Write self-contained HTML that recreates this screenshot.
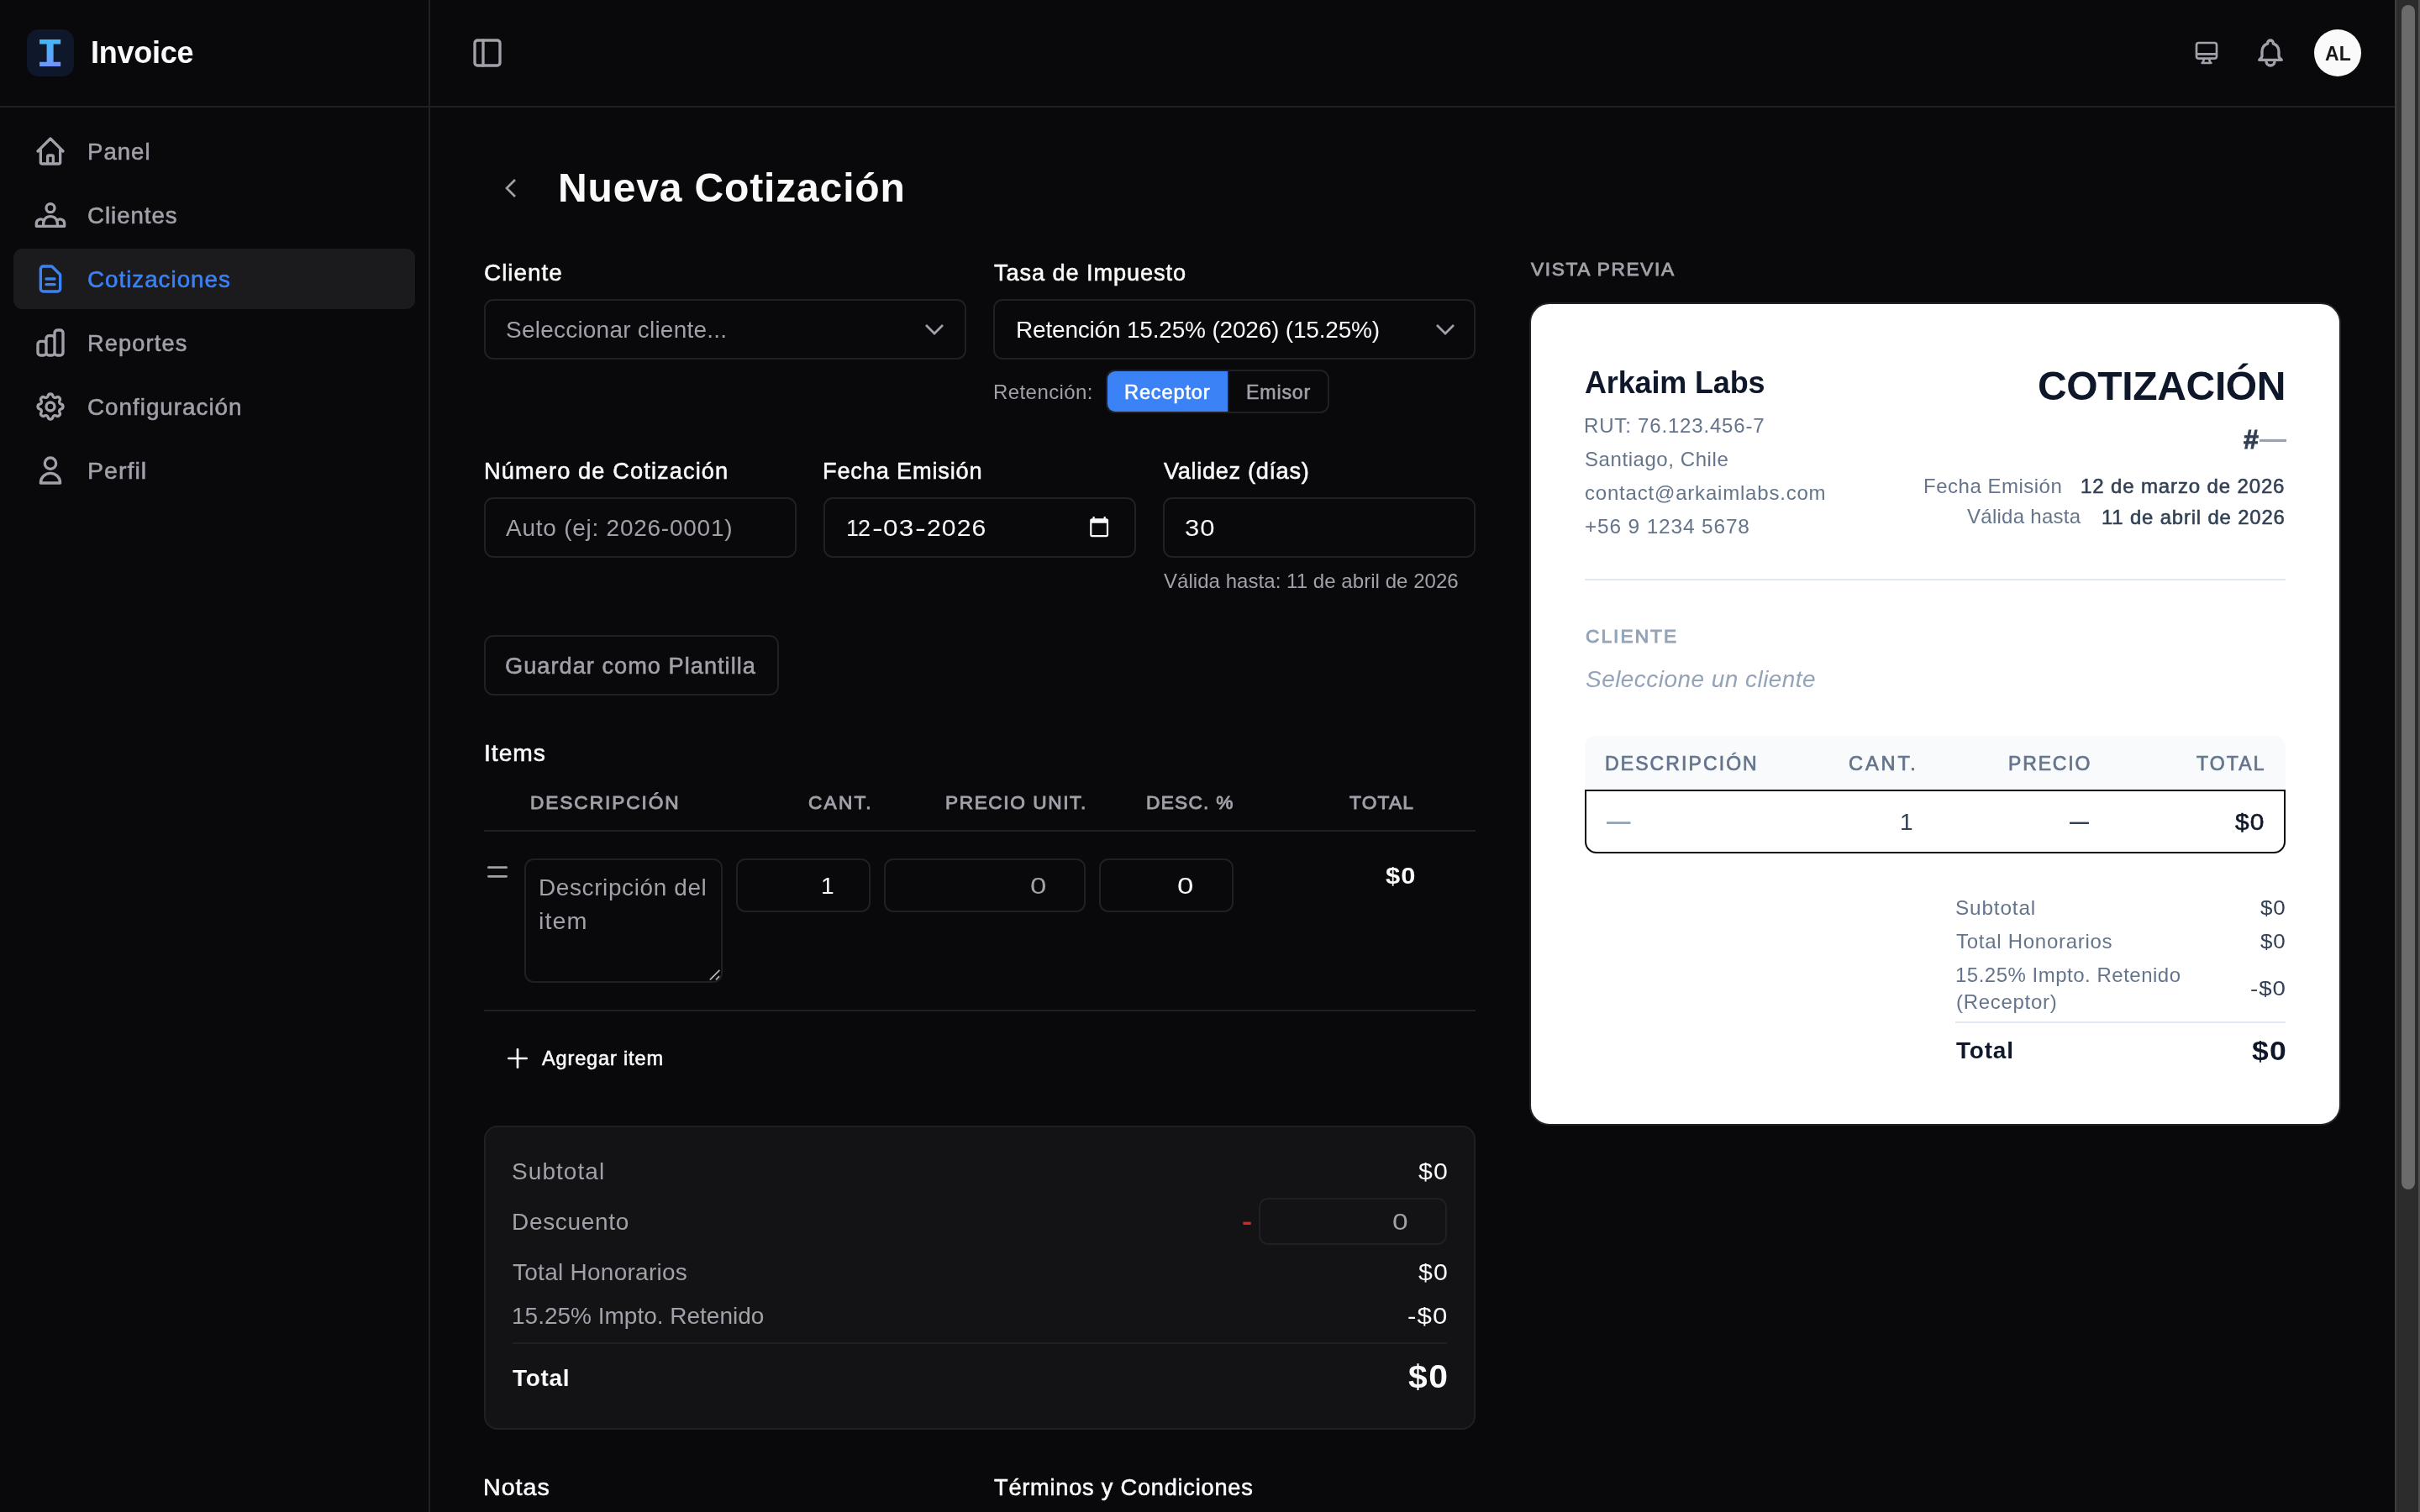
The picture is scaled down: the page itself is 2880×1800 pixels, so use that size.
<!DOCTYPE html>
<html lang="es"><head><meta charset="utf-8"><title>Nueva Cotización</title>
<style>
*{box-sizing:border-box;margin:0;padding:0}
html,body{width:2880px;height:1800px;overflow:hidden;background:#09090b;font-family:"Liberation Sans",sans-serif}
.t{position:absolute;white-space:nowrap;will-change:transform;transform-origin:0 50%}
.a{position:absolute}
.box{position:absolute;border:2px solid #202024;border-radius:11px}
svg{position:absolute;overflow:visible;fill:none;stroke-linecap:round;stroke-linejoin:round}
.ic{stroke:#a1a1aa;stroke-width:2}
.logoI{position:absolute;font-family:"Liberation Mono",monospace;font-weight:700;background:linear-gradient(160deg,#38bdf8 10%,#60a5fa 50%,#8b7cf6 95%);-webkit-background-clip:text;background-clip:text;color:transparent;white-space:nowrap}
</style></head>
<body>
<aside>
<div class="a" style="left:510px;top:0px;width:2px;height:1800px;background:#202024;"></div>
<div class="a" style="left:32px;top:35px;width:56px;height:56px;background:#0f172a;border-radius:14px;"></div>
<span class="logoI" style="left:43.9px;top:39px;font-size:52px;line-height:56px;transform:scale(1.08,0.93);">I</span>
<div class="a" style="left:16px;top:296px;width:478px;height:72px;background:#1b1b1d;border-radius:11px;"></div>
<svg class="ic" style="left:40px;top:160px;" width="40" height="40" viewBox="0 0 24 24"><path d="M3 12l2-2m0 0l7-7 7 7M5 10v10a1 1 0 001 1h3m10-11l2 2m-2-2v10a1 1 0 01-1 1h-3m-6 0a1 1 0 001-1v-4a1 1 0 011-1h2a1 1 0 011 1v4a1 1 0 001 1m-6 0h6"/></svg>
<svg class="ic" style="left:40px;top:236px;" width="40" height="40" viewBox="0 0 24 24"><path d="M17 20h5v-2a3 3 0 00-5.356-1.857M17 20H7m10 0v-2c0-.656-.126-1.283-.356-1.857M7 20H2v-2a3 3 0 015.356-1.857M7 20v-2c0-.656.126-1.283.356-1.857m0 0a5.002 5.002 0 019.288 0M15 7a3 3 0 11-6 0 3 3 0 016 0z"/></svg>
<svg class="ic" style="left:40px;top:312px;stroke:#3b82f6;" width="40" height="40" viewBox="0 0 24 24"><path d="M9 12h6m-6 4h6m2 5H7a2 2 0 01-2-2V5a2 2 0 012-2h5.586a1 1 0 01.707.293l5.414 5.414a1 1 0 01.293.707V19a2 2 0 01-2 2z"/></svg>
<svg class="ic" style="left:40px;top:388px;" width="40" height="40" viewBox="0 0 24 24"><path d="M9 19v-6a2 2 0 00-2-2H5a2 2 0 00-2 2v6a2 2 0 002 2h2a2 2 0 002-2zm0 0V9a2 2 0 012-2h2a2 2 0 012 2v10m-6 0a2 2 0 002 2h2a2 2 0 002-2m0 0V5a2 2 0 012-2h2a2 2 0 012 2v14a2 2 0 01-2 2h-2a2 2 0 01-2-2z"/></svg>
<svg class="ic" style="left:40px;top:464px;" width="40" height="40" viewBox="0 0 24 24"><path d="M10.325 4.317c.426-1.756 2.924-1.756 3.35 0a1.724 1.724 0 002.573 1.066c1.543-.94 3.31.826 2.37 2.37a1.724 1.724 0 001.065 2.572c1.756.426 1.756 2.924 0 3.35a1.724 1.724 0 00-1.066 2.573c.94 1.543-.826 3.31-2.37 2.37a1.724 1.724 0 00-2.572 1.065c-.426 1.756-2.924 1.756-3.35 0a1.724 1.724 0 00-2.573-1.066c-1.543.94-3.31-.826-2.37-2.37a1.724 1.724 0 00-1.065-2.572c-1.756-.426-1.756-2.924 0-3.35a1.724 1.724 0 001.066-2.573c-.94-1.543.826-3.31 2.37-2.37.996.608 2.296.07 2.572-1.065z"/><path d="M15 12a3 3 0 11-6 0 3 3 0 016 0z"/></svg>
<svg class="ic" style="left:40px;top:540px;" width="40" height="40" viewBox="0 0 24 24"><path d="M16 7a4 4 0 11-8 0 4 4 0 018 0zM12 14a7 7 0 00-7 7h14a7 7 0 00-7-7z"/></svg>
<span class="t" id="t0" style="left:107.7px;top:39px;font-size:36px;line-height:47px;color:#fafafa;font-weight:700;letter-spacing:-0.239px;">Invoice</span>
<span class="t" id="t1" style="left:103.8px;top:162px;font-size:27.2px;line-height:37px;color:#a1a1aa;font-weight:400;-webkit-text-stroke:0.55px currentColor;letter-spacing:0.952px;transform:scaleX(1.0161);">Panel</span>
<span class="t" id="t2" style="left:103.9px;top:238px;font-size:27.2px;line-height:37px;color:#a1a1aa;font-weight:400;-webkit-text-stroke:0.55px currentColor;letter-spacing:0.952px;transform:scaleX(1.0169);">Clientes</span>
<span class="t" id="t3" style="left:103.9px;top:314px;font-size:27.2px;line-height:37px;color:#3b82f6;font-weight:400;-webkit-text-stroke:0.55px currentColor;letter-spacing:0.952px;transform:scaleX(1.0222);">Cotizaciones</span>
<span class="t" id="t4" style="left:103.9px;top:390px;font-size:27.2px;line-height:37px;color:#a1a1aa;font-weight:400;-webkit-text-stroke:0.55px currentColor;letter-spacing:1.130px;">Reportes</span>
<span class="t" id="t5" style="left:103.9px;top:466px;font-size:27.2px;line-height:37px;color:#a1a1aa;font-weight:400;-webkit-text-stroke:0.55px currentColor;letter-spacing:0.952px;transform:scaleX(1.0244);">Configuración</span>
<span class="t" id="t6" style="left:103.8px;top:542px;font-size:27.2px;line-height:37px;color:#a1a1aa;font-weight:400;-webkit-text-stroke:0.55px currentColor;letter-spacing:0.952px;transform:scaleX(1.0509);">Perfil</span>
</aside>
<header>
<div class="a" style="left:0px;top:126px;width:2850px;height:2px;background:#202024;"></div>
<svg class="ic" style="left:560px;top:43px;" width="40" height="40" viewBox="0 0 24 24"><rect x="3" y="3" width="18" height="18" rx="2"/><path d="M9 3v18"/></svg>
<svg class="ic" style="left:2610px;top:47px;" width="32" height="32" viewBox="0 0 24 24"><path d="M9.75 17L9 20l-1 1h8l-1-1-.75-3M3 13h18M5 17h14a2 2 0 002-2V5a2 2 0 00-2-2H5a2 2 0 00-2 2v10a2 2 0 002 2z"/></svg>
<svg class="ic" style="left:2682px;top:43px;" width="40" height="40" viewBox="0 0 24 24"><path d="M15 17h5l-1.405-1.405A2.032 2.032 0 0118 14.158V11a6.002 6.002 0 00-4-5.659V5a2 2 0 10-4 0v.341C7.67 6.165 6 8.388 6 11v3.159c0 .538-.214 1.055-.595 1.436L4 17h5m6 0v1a3 3 0 11-6 0v-1m6 0H9"/></svg>
<div class="a" style="left:2754px;top:35px;width:56px;height:56px;background:#fafafa;border-radius:50%;"></div>
<span class="t" id="t7" style="left:2766.7px;top:48px;font-size:23px;line-height:32px;color:#18181b;font-weight:700;letter-spacing:0.092px;">AL</span>
</header>
<main>
<svg class="ic" style="left:592px;top:208px;" width="32" height="32" viewBox="0 0 24 24"><path d="M15.75 19.5 8.25 12l7.5-7.5" stroke-linecap="butt" stroke-linejoin="miter"/></svg>
<div class="box" style="left:576px;top:356px;width:574px;height:72px;border-radius:11px;background:transparent;border-color:#202024;"></div>
<svg class="ic" style="left:1096px;top:376px;" width="32" height="32" viewBox="0 0 24 24"><path d="m19.5 8.25-7.5 7.5-7.5-7.5" stroke-linecap="butt" stroke-linejoin="miter"/></svg>
<div class="box" style="left:1182px;top:356px;width:574px;height:72px;border-radius:11px;background:transparent;border-color:#202024;"></div>
<svg class="ic" style="left:1704px;top:376px;" width="32" height="32" viewBox="0 0 24 24"><path d="m19.5 8.25-7.5 7.5-7.5-7.5" stroke-linecap="butt" stroke-linejoin="miter"/></svg>
<div class="box" style="left:1316px;top:440px;width:266px;height:52px;border-radius:11px;background:transparent;border-color:#202024;"></div>
<div class="a" style="left:1318px;top:442px;width:143px;height:48px;background:#3b82f6;border-radius:9px 0 0 9px;"></div>
<div class="a" style="left:1461px;top:442px;width:2px;height:48px;background:#202024;"></div>
<div class="box" style="left:576px;top:592px;width:372px;height:72px;border-radius:11px;background:transparent;border-color:#202024;"></div>
<div class="box" style="left:980px;top:592px;width:372px;height:72px;border-radius:11px;background:transparent;border-color:#202024;"></div>
<div class="box" style="left:1384px;top:592px;width:372px;height:72px;border-radius:11px;background:transparent;border-color:#202024;"></div>
<svg style="left:1295px;top:613.9px;stroke:none" width="26.28" height="26.28" viewBox="0 0 24 24"><path fill="#fafafa" d="M20 3h-1V1h-2v2H7V1H5v2H4c-1.1 0-2 .9-2 2v16c0 1.1.9 2 2 2h16c1.1 0 2-.9 2-2V5c0-1.1-.9-2-2-2zm0 18H4V8h16v13z"/></svg>
<div class="box" style="left:576px;top:756px;width:351px;height:72px;border-radius:11px;background:transparent;border-color:#202024;"></div>
<div class="a" style="left:576px;top:988px;width:1180px;height:2px;background:#202024;"></div>
<svg class="ic" style="left:576px;top:1022px;" width="32" height="32" viewBox="0 0 24 24"><path d="M4 8h16M4 16h16"/></svg>
<div class="box" style="left:624px;top:1022px;width:236px;height:148px;border-radius:11px;background:transparent;border-color:#202024;"></div>
<svg style="left:844px;top:1154px" width="14" height="14" viewBox="0 0 14 14"><path d="M0.9 12.3 12.4 0.8M8 12.3l4.1-4.1" stroke="#b4b4b4" stroke-width="1.8" stroke-linecap="butt"/></svg>
<div class="box" style="left:876px;top:1022px;width:160px;height:64px;border-radius:11px;background:transparent;border-color:#202024;"></div>
<div class="box" style="left:1052px;top:1022px;width:240px;height:64px;border-radius:11px;background:transparent;border-color:#202024;"></div>
<div class="box" style="left:1308px;top:1022px;width:160px;height:64px;border-radius:11px;background:transparent;border-color:#202024;"></div>
<div class="a" style="left:576px;top:1202px;width:1180px;height:2px;background:#202024;"></div>
<svg class="ic" style="left:600px;top:1244px;stroke:#fafafa;" width="32" height="32" viewBox="0 0 24 24"><path d="M12 4v16m8-8H4"/></svg>
<div class="box" style="left:576px;top:1340px;width:1180px;height:362px;border-radius:16px;background:#131315;border-color:#202024;"></div>
<div class="box" style="left:1498px;top:1426px;width:224px;height:56px;border-radius:11px;background:transparent;border-color:#202024;"></div>
<div class="a" style="left:610px;top:1598px;width:1112px;height:2px;background:#202024;"></div>
<span class="t" id="t8" style="left:664.1px;top:194px;font-size:48px;line-height:59px;color:#fafafa;font-weight:700;letter-spacing:0.849px;">Nueva Cotización</span>
<span class="t" id="t9" style="left:575.7px;top:306px;font-size:27.2px;line-height:37px;color:#fafafa;font-weight:400;-webkit-text-stroke:0.55px currentColor;letter-spacing:0.952px;transform:scaleX(1.0275);">Cliente</span>
<span class="t" id="t10" style="left:1183.4px;top:306px;font-size:27.2px;line-height:37px;color:#fafafa;font-weight:400;-webkit-text-stroke:0.55px currentColor;letter-spacing:0.895px;">Tasa de Impuesto</span>
<span class="t" id="t11" style="left:601.5px;top:374px;font-size:28px;line-height:37px;color:#a1a1aa;font-weight:400;letter-spacing:0.223px;">Seleccionar cliente...</span>
<span class="t" id="t12" style="left:1208.8px;top:374px;font-size:28px;line-height:37px;color:#fafafa;font-weight:400;letter-spacing:-0.189px;">Retención 15.25% (2026) (15.25%)</span>
<span class="t" id="t13" style="left:1182.0px;top:450px;font-size:24px;line-height:33px;color:#a1a1aa;font-weight:400;letter-spacing:0.421px;">Retención:</span>
<span class="t" id="t14" style="left:1337.9px;top:451px;font-size:23.2px;line-height:32px;color:#ffffff;font-weight:400;-webkit-text-stroke:0.55px currentColor;letter-spacing:0.812px;transform:scaleX(1.0188);">Receptor</span>
<span class="t" id="t15" style="left:1482.9px;top:451px;font-size:23.2px;line-height:32px;color:#a1a1aa;font-weight:400;-webkit-text-stroke:0.55px currentColor;letter-spacing:0.833px;">Emisor</span>
<span class="t" id="t16" style="left:575.7px;top:542px;font-size:27.2px;line-height:37px;color:#fafafa;font-weight:400;-webkit-text-stroke:0.55px currentColor;letter-spacing:1.118px;">Número de Cotización</span>
<span class="t" id="t17" style="left:979.3px;top:542px;font-size:27.2px;line-height:37px;color:#fafafa;font-weight:400;-webkit-text-stroke:0.55px currentColor;letter-spacing:0.819px;">Fecha Emisión</span>
<span class="t" id="t18" style="left:1385.1px;top:542px;font-size:27.2px;line-height:37px;color:#fafafa;font-weight:400;-webkit-text-stroke:0.55px currentColor;letter-spacing:0.653px;">Validez (días)</span>
<span class="t" id="t19" style="left:602.1px;top:610px;font-size:28px;line-height:37px;color:#a1a1aa;font-weight:400;letter-spacing:0.752px;">Auto (ej: 2026-0001)</span>
<span class="t" id="t20" style="left:1006.5px;top:610px;font-size:28px;line-height:37px;color:#fafafa;font-weight:400;letter-spacing:-0.980px;transform:scaleX(0.9643);">12</span>
<span class="t" id="t21" style="left:1037.8px;top:610px;font-size:28px;line-height:37px;color:#fafafa;font-weight:400;letter-spacing:0.000px;transform:scaleX(1.3592);">-</span>
<span class="t" id="t22" style="left:1051.3px;top:610px;font-size:28px;line-height:37px;color:#fafafa;font-weight:400;letter-spacing:0.980px;transform:scaleX(1.1267);">03</span>
<span class="t" id="t23" style="left:1089.3px;top:610px;font-size:28px;line-height:37px;color:#fafafa;font-weight:400;letter-spacing:0.000px;transform:scaleX(1.3736);">-</span>
<span class="t" id="t24" style="left:1102.9px;top:610px;font-size:28px;line-height:37px;color:#fafafa;font-weight:400;letter-spacing:0.980px;transform:scaleX(1.0773);">2026</span>
<span class="t" id="t25" style="left:1410.3px;top:610px;font-size:28px;line-height:37px;color:#fafafa;font-weight:400;letter-spacing:0.980px;transform:scaleX(1.1068);">30</span>
<span class="t" id="t26" style="left:1384.5px;top:675px;font-size:24px;line-height:33px;color:#a1a1aa;font-weight:400;letter-spacing:0.048px;">Válida hasta: 11 de abril de 2026</span>
<span class="t" id="t27" style="left:601.4px;top:774px;font-size:27.2px;line-height:37px;color:#a1a1aa;font-weight:400;-webkit-text-stroke:0.55px currentColor;letter-spacing:1.018px;">Guardar como Plantilla</span>
<span class="t" id="t28" style="left:576.0px;top:878px;font-size:27.2px;line-height:37px;color:#fafafa;font-weight:400;-webkit-text-stroke:0.55px currentColor;letter-spacing:0.952px;transform:scaleX(1.0373);">Items</span>
<span class="t" id="t29" style="left:631.2px;top:939px;font-size:22.7px;line-height:32px;color:#a1a1aa;font-weight:400;-webkit-text-stroke:0.9px currentColor;letter-spacing:1.908px;">DESCRIPCIÓN</span>
<span class="t" id="t30" style="left:962.1px;top:939px;font-size:22.7px;line-height:32px;color:#a1a1aa;font-weight:400;-webkit-text-stroke:0.9px currentColor;letter-spacing:2.221px;">CANT.</span>
<span class="t" id="t31" style="left:1124.8px;top:939px;font-size:22.7px;line-height:32px;color:#a1a1aa;font-weight:400;-webkit-text-stroke:0.9px currentColor;letter-spacing:1.569px;">PRECIO UNIT.</span>
<span class="t" id="t32" style="left:1363.8px;top:939px;font-size:22.7px;line-height:32px;color:#a1a1aa;font-weight:400;-webkit-text-stroke:0.9px currentColor;letter-spacing:1.262px;">DESC. %</span>
<span class="t" id="t33" style="left:1606.4px;top:939px;font-size:22.7px;line-height:32px;color:#a1a1aa;font-weight:400;-webkit-text-stroke:0.9px currentColor;letter-spacing:1.222px;">TOTAL</span>
<span class="t" id="t34" style="left:641.1px;top:1038px;font-size:28px;line-height:37px;color:#a1a1aa;font-weight:400;letter-spacing:0.599px;">Descripción del</span>
<span class="t" id="t35" style="left:641.4px;top:1078px;font-size:28px;line-height:37px;color:#a1a1aa;font-weight:400;letter-spacing:0.980px;transform:scaleX(1.0285);">item</span>
<span class="t" id="t36" style="left:976.9px;top:1036px;font-size:28px;line-height:37px;color:#fafafa;font-weight:400;letter-spacing:0.000px;transform:scaleX(1.0026);">1</span>
<span class="t" id="t37" style="left:1225.6px;top:1036px;font-size:28px;line-height:37px;color:#a1a1aa;font-weight:400;letter-spacing:0.000px;transform:scaleX(1.2433);">0</span>
<span class="t" id="t38" style="left:1401.4px;top:1036px;font-size:28px;line-height:37px;color:#fafafa;font-weight:400;letter-spacing:0.000px;transform:scaleX(1.2433);">0</span>
<span class="t" id="t39" style="left:1649.1px;top:1024px;font-size:28px;line-height:37px;color:#fafafa;font-weight:700;letter-spacing:0.980px;transform:scaleX(1.1043);">$0</span>
<span class="t" id="t40" style="left:645.1px;top:1244px;font-size:23.2px;line-height:32px;color:#fafafa;font-weight:400;-webkit-text-stroke:0.55px currentColor;letter-spacing:0.812px;transform:scaleX(1.0166);">Agregar item</span>
<span class="t" id="t41" style="left:609.2px;top:1376px;font-size:28px;line-height:37px;color:#a1a1aa;font-weight:400;letter-spacing:1.068px;">Subtotal</span>
<span class="t" id="t42" style="left:1688.3px;top:1376px;font-size:28px;line-height:37px;color:#fafafa;font-weight:400;letter-spacing:0.980px;transform:scaleX(1.0804);">$0</span>
<span class="t" id="t43" style="left:609.0px;top:1436px;font-size:28px;line-height:37px;color:#a1a1aa;font-weight:400;letter-spacing:0.684px;">Descuento</span>
<span class="t" id="t44" style="left:1478.4px;top:1436px;font-size:28px;line-height:37px;color:#dc2626;font-weight:700;letter-spacing:0.000px;transform:scaleX(1.3048);">-</span>
<span class="t" id="t45" style="left:1656.5px;top:1436px;font-size:28px;line-height:37px;color:#a1a1aa;font-weight:400;letter-spacing:0.000px;transform:scaleX(1.1986);">0</span>
<span class="t" id="t46" style="left:609.5px;top:1496px;font-size:28px;line-height:37px;color:#a1a1aa;font-weight:400;letter-spacing:0.265px;">Total Honorarios</span>
<span class="t" id="t47" style="left:1688.2px;top:1496px;font-size:28px;line-height:37px;color:#fafafa;font-weight:400;letter-spacing:0.980px;transform:scaleX(1.0804);">$0</span>
<span class="t" id="t48" style="left:609.1px;top:1548px;font-size:28px;line-height:37px;color:#a1a1aa;font-weight:400;letter-spacing:-0.002px;">15.25% Impto. Retenido</span>
<span class="t" id="t49" style="left:1675.4px;top:1548px;font-size:28px;line-height:37px;color:#fafafa;font-weight:400;letter-spacing:0.980px;transform:scaleX(1.1147);">-$0</span>
<span class="t" id="t50" style="left:610.2px;top:1622px;font-size:28px;line-height:37px;color:#fafafa;font-weight:700;letter-spacing:0.653px;">Total</span>
<span class="t" id="t51" style="left:1676.3px;top:1614px;font-size:39px;line-height:49px;color:#fafafa;font-weight:700;letter-spacing:1.365px;transform:scaleX(1.0466);">$0</span>
<span class="t" id="t52" style="left:574.8px;top:1752px;font-size:27.2px;line-height:37px;color:#fafafa;font-weight:400;-webkit-text-stroke:0.55px currentColor;letter-spacing:0.952px;transform:scaleX(1.0526);">Notas</span>
<span class="t" id="t53" style="left:1182.7px;top:1752px;font-size:27.2px;line-height:37px;color:#fafafa;font-weight:400;-webkit-text-stroke:0.55px currentColor;letter-spacing:0.770px;">Términos y Condiciones</span>
</main>
<section>
<div class="a" style="left:1820px;top:360px;width:966px;height:980px;background:#ffffff;border-radius:24px;border:2px solid #222226;"></div>
<div class="a" style="left:1886px;top:689px;width:834px;height:2px;background:#e2e8f0;"></div>
<div class="a" style="left:1886px;top:876px;width:834px;height:65px;background:#f8fafc;border-radius:14px 14px 0 0;"></div>
<div class="a" style="left:1886px;top:940px;width:834px;height:76px;background:transparent;border:2px solid #0a0a0a;border-radius:0 0 14px 14px;"></div>
<div class="a" style="left:2327px;top:1216px;width:393px;height:2px;background:#e2e8f0;"></div>
<span class="t" id="t54" style="left:1821.8px;top:304px;font-size:22.7px;line-height:32px;color:#a1a1aa;font-weight:400;-webkit-text-stroke:0.9px currentColor;letter-spacing:1.634px;">VISTA PREVIA</span>
<span class="t" id="t55" style="left:1886.0px;top:432px;font-size:36px;line-height:47px;color:#0f172a;font-weight:700;letter-spacing:-0.153px;">Arkaim Labs</span>
<span class="t" id="t56" style="left:1885.1px;top:490px;font-size:24px;line-height:33px;color:#64748b;font-weight:400;letter-spacing:0.822px;">RUT: 76.123.456-7</span>
<span class="t" id="t57" style="left:1885.6px;top:530px;font-size:24px;line-height:33px;color:#64748b;font-weight:400;letter-spacing:0.568px;">Santiago, Chile</span>
<span class="t" id="t58" style="left:1886.0px;top:570px;font-size:24px;line-height:33px;color:#64748b;font-weight:400;letter-spacing:0.800px;">contact@arkaimlabs.com</span>
<span class="t" id="t59" style="left:1885.9px;top:610px;font-size:24px;line-height:33px;color:#64748b;font-weight:400;letter-spacing:0.840px;transform:scaleX(1.0171);">+56 9 1234 5678</span>
<span class="t" id="t60" style="left:2425.3px;top:430px;font-size:48px;line-height:59px;color:#0f172a;font-weight:700;letter-spacing:-0.346px;">COTIZACIÓN</span>
<span class="t" id="t61" style="left:2669.8px;top:503px;font-size:31px;line-height:41px;color:#334155;font-weight:700;letter-spacing:0.000px;-webkit-text-stroke:1px currentColor;transform:scaleX(1.0347);">#</span>
<span class="t" id="t62" style="left:2689.1px;top:501px;font-size:32px;line-height:42px;color:#94a3b8;font-weight:700;letter-spacing:0.000px;transform:scaleX(0.9969);">—</span>
<span class="t" id="t63" style="left:2289.1px;top:562px;font-size:24px;line-height:33px;color:#64748b;font-weight:400;letter-spacing:0.506px;">Fecha Emisión</span>
<span class="t" id="t64" style="left:2476.3px;top:563px;font-size:23.2px;line-height:32px;color:#334155;font-weight:400;-webkit-text-stroke:0.55px currentColor;letter-spacing:0.812px;transform:scaleX(1.0373);">12 de marzo de 2026</span>
<span class="t" id="t65" style="left:2341.4px;top:598px;font-size:24px;line-height:33px;color:#64748b;font-weight:400;letter-spacing:0.276px;">Válida hasta</span>
<span class="t" id="t66" style="left:2500.9px;top:600px;font-size:23.2px;line-height:32px;color:#334155;font-weight:400;-webkit-text-stroke:0.55px currentColor;letter-spacing:0.812px;transform:scaleX(1.0305);">11 de abril de 2026</span>
<span class="t" id="t67" style="left:1886.8px;top:741px;font-size:22.7px;line-height:32px;color:#94a3b8;font-weight:400;-webkit-text-stroke:0.9px currentColor;letter-spacing:2.058px;">CLIENTE</span>
<span class="t" id="t68" style="left:1886.7px;top:790px;font-size:28px;line-height:37px;color:#94a3b8;font-weight:400;letter-spacing:0.453px;font-style:italic;">Seleccione un cliente</span>
<span class="t" id="t69" style="left:1909.9px;top:893px;font-size:23.0px;line-height:32px;color:#64748b;font-weight:400;-webkit-text-stroke:0.7px currentColor;letter-spacing:2.099px;">DESCRIPCIÓN</span>
<span class="t" id="t70" style="left:2199.9px;top:893px;font-size:23.0px;line-height:32px;color:#64748b;font-weight:400;-webkit-text-stroke:0.7px currentColor;letter-spacing:2.760px;transform:scaleX(1.0296);">CANT.</span>
<span class="t" id="t71" style="left:2390.0px;top:893px;font-size:23.0px;line-height:32px;color:#64748b;font-weight:400;-webkit-text-stroke:0.7px currentColor;letter-spacing:1.849px;">PRECIO</span>
<span class="t" id="t72" style="left:2613.8px;top:893px;font-size:23.0px;line-height:32px;color:#64748b;font-weight:400;-webkit-text-stroke:0.7px currentColor;letter-spacing:2.122px;">TOTAL</span>
<span class="t" id="t73" style="left:1912.3px;top:959px;font-size:28px;line-height:37px;color:#94a3b8;font-weight:700;letter-spacing:0.000px;transform:scaleX(1.0179);">—</span>
<span class="t" id="t74" style="left:2261.1px;top:960px;font-size:28px;line-height:37px;color:#334155;font-weight:400;letter-spacing:0.000px;transform:scaleX(1.0026);">1</span>
<span class="t" id="t75" style="left:2462.6px;top:961px;font-size:24px;line-height:33px;color:#334155;font-weight:700;letter-spacing:0.000px;transform:scaleX(0.9667);">—</span>
<span class="t" id="t76" style="left:2660.0px;top:960px;font-size:27.2px;line-height:37px;color:#0f172a;font-weight:400;-webkit-text-stroke:0.55px currentColor;letter-spacing:0.952px;transform:scaleX(1.0985);">$0</span>
<span class="t" id="t77" style="left:2326.8px;top:1064px;font-size:24px;line-height:33px;color:#64748b;font-weight:400;letter-spacing:0.840px;transform:scaleX(1.0135);">Subtotal</span>
<span class="t" id="t78" style="left:2690.0px;top:1064px;font-size:24px;line-height:33px;color:#334155;font-weight:400;letter-spacing:0.840px;transform:scaleX(1.0813);">$0</span>
<span class="t" id="t79" style="left:2327.7px;top:1104px;font-size:24px;line-height:33px;color:#64748b;font-weight:400;letter-spacing:0.721px;">Total Honorarios</span>
<span class="t" id="t80" style="left:2690.0px;top:1104px;font-size:24px;line-height:33px;color:#334155;font-weight:400;letter-spacing:0.840px;transform:scaleX(1.0813);">$0</span>
<span class="t" id="t81" style="left:2327.3px;top:1144px;font-size:24px;line-height:33px;color:#64748b;font-weight:400;letter-spacing:0.502px;">15.25% Impto. Retenido</span>
<span class="t" id="t82" style="left:2327.7px;top:1176px;font-size:24px;line-height:33px;color:#64748b;font-weight:400;letter-spacing:0.706px;">(Receptor)</span>
<span class="t" id="t83" style="left:2677.9px;top:1160px;font-size:24px;line-height:33px;color:#334155;font-weight:400;letter-spacing:0.840px;transform:scaleX(1.1536);">-$0</span>
<span class="t" id="t84" style="left:2328.2px;top:1232px;font-size:28px;line-height:37px;color:#0f172a;font-weight:700;letter-spacing:0.778px;">Total</span>
<span class="t" id="t85" style="left:2679.8px;top:1230px;font-size:32px;line-height:42px;color:#0f172a;font-weight:700;letter-spacing:1.120px;transform:scaleX(1.1108);">$0</span>
</section>
<div class="a" style="left:2850px;top:0px;width:30px;height:1800px;background:#2c2c2c;border-left:2px solid #3f3f3f;border-right:2px solid #4e4e4e;"></div>
<div class="a" style="left:2858px;top:6px;width:16px;height:1410px;background:#6b6b6b;border-radius:8px;"></div>
</body></html>
